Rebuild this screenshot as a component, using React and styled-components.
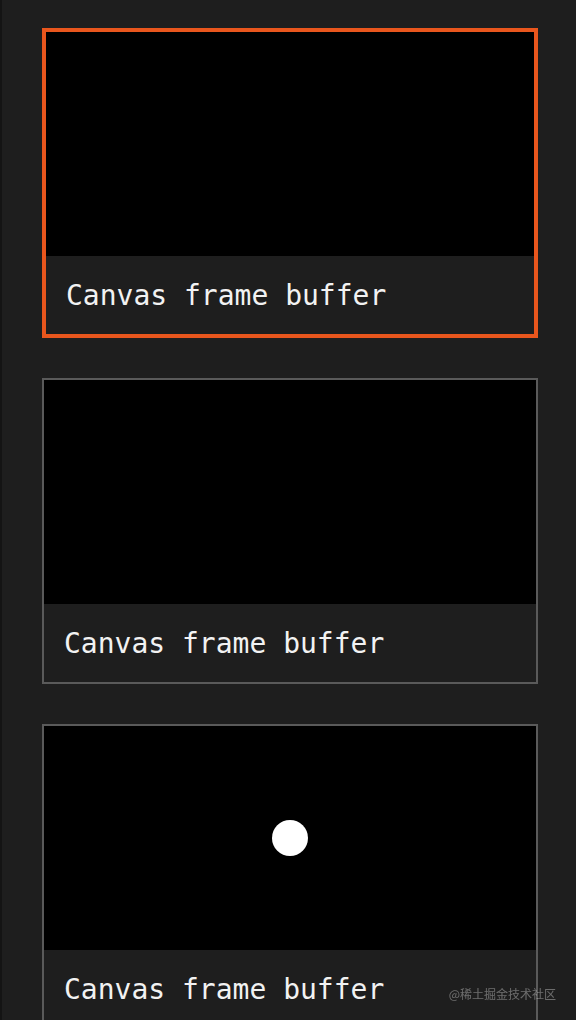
import React from 'react'
import styled, {createGlobalStyle} from 'styled-components'

var GlobalStyle = createGlobalStyle`
  html, body {
    margin: 0;
    padding: 0;
    background-color: #1e1e1e;
  }
  body {
    font-family: "DejaVu Sans Mono", "Liberation Mono", monospace;
  }
`

var Page = styled.div`
  min-height: 100vh;
  box-sizing: border-box;
  border-left: 2px solid #141414;
  padding: 28px 38px 40px 40px;
  display: flex;
  flex-direction: column;
  gap: 40px;
`

var Card = styled.div`
  box-sizing: border-box;
  width: 496px;
  border: ${props => props.selected ? '4px solid #e9561d' : '2px solid #5a5a5a'};
  display: flex;
  flex-direction: column;
  background-color: #1e1e1e;
`

var Screen = styled.div`
  height: 224px;
  background-color: #000;
  display: flex;
  align-items: center;
  justify-content: center;
`

var Dot = styled.div`
  width: 36px;
  height: 36px;
  border-radius: 50%;
  background-color: #fff;
`

var Caption = styled.div`
  height: 78px;
  padding: 0 20px;
  display: flex;
  align-items: center;
  color: #f2f2f2;
  font-size: 28px;
  white-space: pre;
`

var Watermark = styled.div`
  position: fixed;
  right: 20px;
  bottom: 18px;
  font-family: "Noto Sans CJK SC", "Noto Sans", sans-serif;
  font-size: 12px;
  line-height: 16px;
  color: rgba(255, 255, 255, 0.35);
`

var frames = [
  {selected: true, dot: false},
  {selected: false, dot: false},
  {selected: false, dot: true}
]

export default function App () {
  return (
    <>
      <GlobalStyle />
      <Page>
        {frames.map((f, i) => (
          <Card key={i} selected={f.selected}>
            <Screen>{f.dot && <Dot />}</Screen>
            <Caption>Canvas frame buffer</Caption>
          </Card>
        ))}
      </Page>
      <Watermark>@稀土掘金技术社区</Watermark>
    </>
  )
}
